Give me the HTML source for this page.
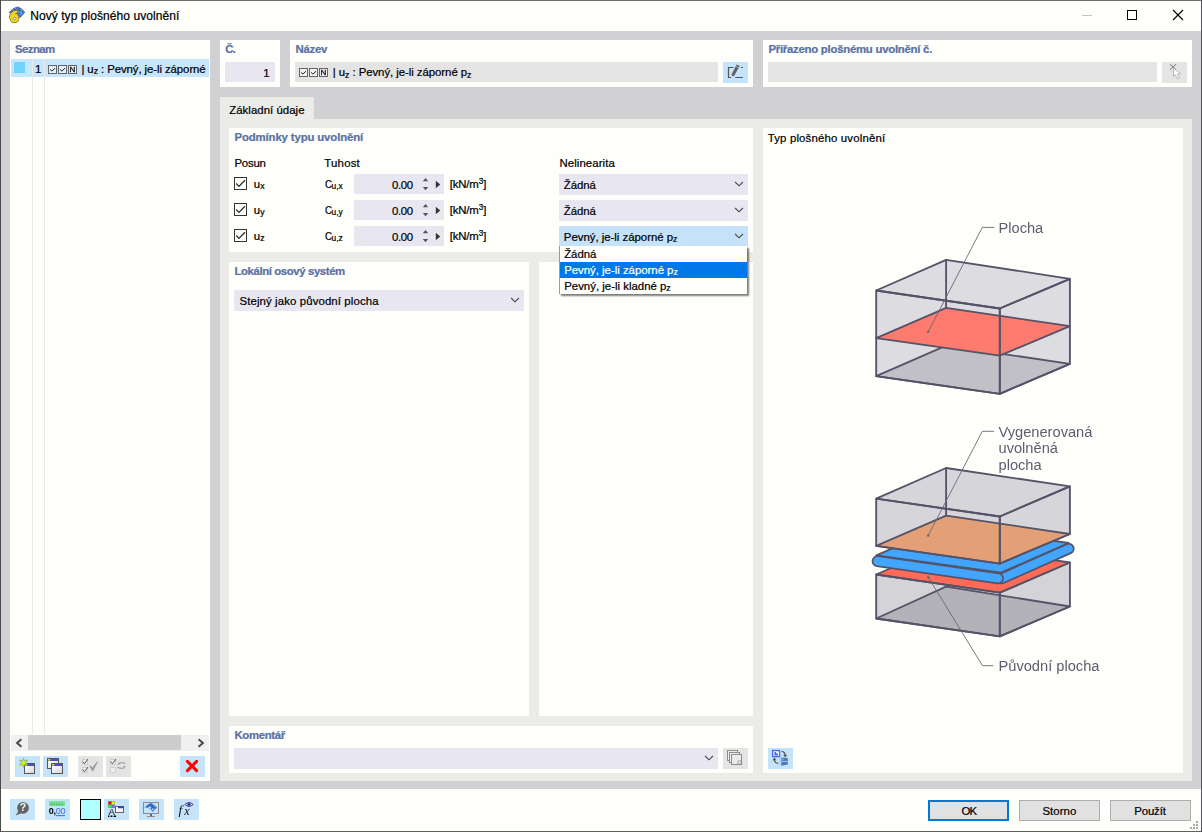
<!DOCTYPE html>
<html lang="cs">
<head>
<meta charset="utf-8">
<title>Nový typ plošného uvolnění</title>
<style>
html,body{margin:0;padding:0}
body{width:1202px;height:832px;overflow:hidden;position:relative;background:#d1d1d4;
font-family:"Liberation Sans",sans-serif;font-size:11.4px;color:#000}
#w{position:absolute;left:0;top:0;width:1202px;height:832px;overflow:hidden}
#w div,#w svg,#w .t{position:absolute}
#w svg{overflow:visible}
.t{white-space:nowrap;-webkit-text-stroke:0.22px currentColor}
.sb{position:relative;display:inline-block;line-height:0}
#w .t span{position:static}
#w .t .sb{position:relative}
</style>
</head>
<body>
<div id="w">
<div style="left:0px;top:0px;width:1202px;height:832px;background:#d1d1d4;"></div>
<div style="left:1px;top:1px;width:1200px;height:30px;background:#fefefb;"></div>
<div style="left:1px;top:789px;width:1200px;height:42px;background:#fefefb;"></div>
<svg width="0" height="0" style="left:0;top:0"><defs><linearGradient id="wg" x1="0" y1="0" x2="1" y2="1"><stop offset="0" stop-color="#ffffff"/><stop offset="1" stop-color="#d6d6d6"/></linearGradient></defs></svg>
<svg style="left:8px;top:6px;will-change:transform;" width="18" height="18" viewBox="0 0 18 18"><path d="M1.2 6.6 C3.6 3.6 6.6 1.6 9.6 1 C12.6 1.8 15 3.8 16.7 6.4 Q14.4 9 11.8 11.8 Q10.6 8.2 8.6 6.8 Q5 5.4 1.2 6.6 Z" fill="#3f7cd4" stroke="#4a5a78" stroke-width="0.8"/><path d="M4.4 4.6 Q8 4.2 11.4 6 M7 2.8 Q10.8 4 13.4 7.6 M13.4 3.6 Q13.6 7 12.6 9.4" stroke="#8fc4f6" stroke-width="0.9" fill="none"/><path d="M10.6 1.8 Q12 5.4 11.4 9.6 M5.4 3.4 Q9 3.2 14.8 5.6" stroke="#33507c" stroke-width="0.6" fill="none"/><path d="M3.0 11.2 Q3.2 6.6 8.4 5.6" fill="none" stroke="#5a5630" stroke-width="3.8" stroke-linecap="round"/><circle cx="6.5" cy="12.3" r="4.75" fill="#5a5630"/><circle cx="6.5" cy="12.3" r="4.1" fill="#f4d320"/><path d="M3.0 11.2 Q3.2 6.6 8.4 5.6" fill="none" stroke="#f4d320" stroke-width="2.4" stroke-linecap="round"/><text x="6.5" y="16.1" font-size="13" font-weight="700" text-anchor="middle" font-family="Liberation Sans, sans-serif" fill="#f4d320">6</text><path d="M6.4 7.6 Q8.6 6.8 10.4 7.2 L11.4 9.4 Q9 7.6 6.4 7.6 Z" fill="#55606e"/><path d="M9.6 6.4 Q11.6 7.6 12.2 10.6 L13.8 8.8 Q12.6 6.2 10.6 5.2 Z" fill="#3f8ae4"/><circle cx="6.5" cy="12.5" r="1.3" fill="#fff" stroke="#777" stroke-width="0.8"/></svg>
<span class="t" id="t1" style="top:9.14px;font-size:12px;line-height:15px;color:#000;left:30.2px;letter-spacing:0.068px;">Nový typ plošného uvolnění</span>
<div style="left:1082px;top:15px;width:10px;height:1px;background:#c4c4c4;"></div>
<svg style="left:1126px;top:9px;" width="12" height="12" viewBox="0 0 12 12"><rect x="1.5" y="1.5" width="9" height="9" fill="none" stroke="#000" stroke-width="1"/></svg>
<svg style="left:1172px;top:9px;" width="12" height="12" viewBox="0 0 12 12"><path d="M1 1 L11 11 M11 1 L1 11" fill="none" stroke="#000" stroke-width="1.1"/></svg>
<div style="left:10px;top:40px;width:200px;height:741px;background:#fefefb;"></div>
<span class="t" id="t2" style="top:42.05px;font-size:11.4px;line-height:14px;color:#5a70a3;font-weight:700;left:15px;letter-spacing:-0.560px;">Seznam</span>
<div style="left:11px;top:59px;width:198px;height:18px;background:#c7e5fb;"></div>
<div style="left:14px;top:62px;width:11px;height:11px;background:#6fd3ff;"></div>
<div style="left:32px;top:59px;width:1px;height:675px;background:#e9e9e7;"></div>
<div style="left:44px;top:59px;width:1px;height:675px;background:#e9e9e7;"></div>
<span class="t" id="t3" style="top:62.05px;font-size:11.4px;line-height:14px;color:#000;right:1160.6px;">1</span>
<svg style="left:48px;top:65px;" width="9" height="9" viewBox="0 0 9 9"><rect x="0.5" y="0.5" width="8" height="8" fill="rgba(255,255,255,0.45)" stroke="rgba(50,50,55,0.72)" stroke-width="1"/><path d="M2 4.4 L3.9 6.1 L7 3.2" fill="none" stroke="#222" stroke-width="1"/></svg>
<svg style="left:58px;top:65px;" width="9" height="9" viewBox="0 0 9 9"><rect x="0.5" y="0.5" width="8" height="8" fill="rgba(255,255,255,0.45)" stroke="rgba(50,50,55,0.72)" stroke-width="1"/><path d="M2 4.4 L3.9 6.1 L7 3.2" fill="none" stroke="#222" stroke-width="1"/></svg>
<svg style="left:68px;top:65px;will-change:transform;" width="9" height="9" viewBox="0 0 9 9"><rect x="0.5" y="0.5" width="8" height="8" fill="rgba(255,255,255,0.45)" stroke="rgba(50,50,55,0.72)" stroke-width="1"/><text x="4.5" y="7.2" font-size="8" font-weight="400" text-anchor="middle" font-family="Liberation Sans, sans-serif" fill="#111" stroke="#111" stroke-width="0.35">N</text></svg>
<span class="t" id="t4" style="top:62.05px;font-size:11.4px;line-height:14px;color:#000;left:81.4px;letter-spacing:-0.079px;">| u<span class="sb" style="font-size:8.7px;top:1.2px;">z</span> : Pevný, je-li záporné</span>
<div style="left:11px;top:735px;width:198px;height:16px;background:#f0f0f0;"></div>
<div style="left:28px;top:735px;width:153px;height:15px;background:#cdcdcd;"></div>
<svg style="left:14px;top:737px;" width="10" height="12" viewBox="0 0 10 12"><path d="M7.4 2.2 L3.1 6 L7.4 9.8" fill="none" stroke="#484848" stroke-width="2"/></svg>
<svg style="left:196px;top:737px;" width="10" height="12" viewBox="0 0 10 12"><path d="M2.6 2.2 L6.9 6 L2.6 9.8" fill="none" stroke="#484848" stroke-width="2"/></svg>
<div style="left:15px;top:756px;width:25px;height:21px;background:#c5e3f9;"></div>
<svg style="left:15px;top:756px;" width="25" height="21" viewBox="0 0 25 21"><rect x="9.5" y="7.5" width="10" height="10" fill="#f4f4f4" stroke="#555" stroke-width="1"/><rect x="10" y="8" width="9" height="2" fill="#555"/><rect x="13" y="8" width="6" height="1.6" fill="#4a4af0"/><rect x="10.2" y="8.2" width="2" height="1.2" fill="#fff"/><rect x="10" y="10" width="9" height="7" fill="url(#wg)"/><path d="M8.5 2.2 L9.6 5 L12.6 4.2 L10.8 6.6 L12.9 8.9 L9.9 8.5 L8.6 11.3 L7.7 8.5 L4.5 9 L6.7 6.8 L4.6 4.3 L7.6 5 Z" fill="#c8ff00" stroke="#7a9a4a" stroke-width="0.6"/></svg>
<div style="left:43px;top:756px;width:25px;height:21px;background:#c5e3f9;"></div>
<svg style="left:43px;top:756px;" width="25" height="21" viewBox="0 0 25 21"><rect x="4.5" y="2.5" width="11" height="10" fill="#f4f4f4" stroke="#555" stroke-width="1"/><rect x="5" y="3" width="10" height="2" fill="#555"/><rect x="8" y="3" width="7" height="1.6" fill="#4a4af0"/><rect x="5.2" y="3.2" width="2" height="1.2" fill="#fff"/><rect x="5" y="5" width="10" height="7" fill="url(#wg)"/><rect x="8.5" y="7.5" width="11" height="10" fill="#f4f4f4" stroke="#555" stroke-width="1"/><rect x="9" y="8" width="10" height="2" fill="#555"/><rect x="12" y="8" width="7" height="1.6" fill="#4a4af0"/><rect x="9.2" y="8.2" width="2" height="1.2" fill="#fff"/><rect x="9" y="10" width="10" height="7" fill="url(#wg)"/></svg>
<div style="left:78px;top:756px;width:25px;height:21px;background:#e4e4e4;"></div>
<svg style="left:78px;top:756px;" width="25" height="21" viewBox="0 0 25 21"><rect x="4.5" y="3.5" width="5" height="5" fill="#eeeeee" stroke="#cfcfcf" stroke-width="1"/><path d="M4.7 5.6 L6.5 7.7 L9.9 3.1" fill="none" stroke="#4c4c4c" stroke-width="0.95"/><rect x="4.5" y="11.5" width="5" height="5" fill="#eeeeee" stroke="#cfcfcf" stroke-width="1"/><path d="M4.7 13.6 L6.5 15.7 L9.9 11.1" fill="none" stroke="#4c4c4c" stroke-width="0.95"/><path d="M11.6 10.1 Q13.2 10.3 14.5 11.9 Q16.6 8.2 19.7 5.8 Q17.2 9.8 15.2 14.6 Q14.6 15.2 13.9 14.4 Q13 12 11.6 10.1 Z" fill="#9c9c9c" stroke="#9c9c9c" stroke-width="0.7" stroke-linejoin="round"/></svg>
<div style="left:106px;top:756px;width:25px;height:21px;background:#e4e4e4;"></div>
<svg style="left:106px;top:756px;" width="25" height="21" viewBox="0 0 25 21"><rect x="4.5" y="3.5" width="5" height="5" fill="#eeeeee" stroke="#cfcfcf" stroke-width="1"/><path d="M4.7 5.6 L6.5 7.7 L9.9 3.1" fill="none" stroke="#4c4c4c" stroke-width="0.95"/><rect x="4.5" y="11.5" width="5" height="5" fill="#eeeeee" stroke="#cfcfcf" stroke-width="1"/><path d="M12.6 7.6 Q15.6 5.6 19.3 7.6" fill="none" stroke="#a6a6a6" stroke-width="1.2"/><path d="M11 8.5 L13.6 6.4 L13.8 8.6 Z" fill="#9a9a9a"/><path d="M11.5 10.9 Q15 13.6 18.4 11.4" fill="none" stroke="#a6a6a6" stroke-width="1.2"/><path d="M20 10 L17.4 12.4 L17.2 10.2 Z" fill="#9a9a9a"/></svg>
<div style="left:180px;top:756px;width:25px;height:21px;background:#c5e3f9;"></div>
<svg style="left:180px;top:756px;" width="25" height="21" viewBox="0 0 25 21"><path d="M7.4 5.4 L16.6 14.6 M16.6 5.4 L7.4 14.6" fill="none" stroke="#ff0000" stroke-width="3" stroke-linecap="round"/></svg>
<div style="left:220px;top:40px;width:60px;height:47px;background:#fefefb;"></div>
<span class="t" id="t5" style="top:42.05px;font-size:11.4px;line-height:14px;color:#5a70a3;font-weight:700;left:225.2px;letter-spacing:-0.653px;">Č.</span>
<div style="left:225px;top:62px;width:50px;height:20px;background:#e8e7f1;"></div>
<span class="t" id="t6" style="top:65.65px;font-size:11.4px;line-height:14px;color:#000;right:932.5px;">1</span>
<div style="left:290px;top:40px;width:463px;height:47px;background:#fefefb;"></div>
<span class="t" id="t7" style="top:42.05px;font-size:11.4px;line-height:14px;color:#5a70a3;font-weight:700;left:295.6px;letter-spacing:-0.308px;">Název</span>
<div style="left:295px;top:62px;width:423px;height:20px;background:#e4e4e4;"></div>
<svg style="left:299px;top:68px;" width="9" height="9" viewBox="0 0 9 9"><rect x="0.5" y="0.5" width="8" height="8" fill="rgba(255,255,255,0.45)" stroke="rgba(50,50,55,0.72)" stroke-width="1"/><path d="M2 4.4 L3.9 6.1 L7 3.2" fill="none" stroke="#222" stroke-width="1"/></svg>
<svg style="left:309px;top:68px;" width="9" height="9" viewBox="0 0 9 9"><rect x="0.5" y="0.5" width="8" height="8" fill="rgba(255,255,255,0.45)" stroke="rgba(50,50,55,0.72)" stroke-width="1"/><path d="M2 4.4 L3.9 6.1 L7 3.2" fill="none" stroke="#222" stroke-width="1"/></svg>
<svg style="left:319px;top:68px;will-change:transform;" width="9" height="9" viewBox="0 0 9 9"><rect x="0.5" y="0.5" width="8" height="8" fill="rgba(255,255,255,0.45)" stroke="rgba(50,50,55,0.72)" stroke-width="1"/><text x="4.5" y="7.2" font-size="8" font-weight="400" text-anchor="middle" font-family="Liberation Sans, sans-serif" fill="#111" stroke="#111" stroke-width="0.35">N</text></svg>
<span class="t" id="t8" style="top:65.45px;font-size:11.4px;line-height:14px;color:#000;left:332.7px;letter-spacing:-0.050px;">| u<span class="sb" style="font-size:8.7px;top:1.2px;">z</span> : Pevný, je-li záporné p<span class="sb" style="font-size:8.7px;top:1.2px;">z</span></span>
<div style="left:723px;top:62px;width:25px;height:21px;background:#c5e3f9;"></div>
<svg style="left:723px;top:62px;" width="25" height="21" viewBox="0 0 25 21"><path d="M10.4 5.5 L5.5 5.5 L5.5 15.5 L8 15.5 M12.2 15.5 L20 15.5 M18 5.5 L20 5.5" fill="none" stroke="#555" stroke-width="1.2"/><path d="M13.7 2.5 L16.6 3.9 L11.5 13.3 L9.2 15.3 L8.7 12.2 Z" fill="#606060"/><path d="M12.9 4.4 L15.6 5.8" stroke="#c5e3f9" stroke-width="0.6"/><path d="M9.0 13.4 L10.4 14.2 L9.2 15.3 Z" fill="#d0e4f4"/></svg>
<div style="left:763px;top:40px;width:429px;height:47px;background:#fefefb;"></div>
<span class="t" id="t9" style="top:42.05px;font-size:11.4px;line-height:14px;color:#5a70a3;font-weight:700;left:768.4px;letter-spacing:-0.261px;">Přiřazeno plošnému uvolnění č.</span>
<div style="left:768px;top:62px;width:389px;height:20px;background:#e4e4e4;"></div>
<div style="left:1162px;top:62px;width:25px;height:21px;background:#e4e4e4;"></div>
<svg style="left:1162px;top:62px;" width="25" height="21" viewBox="0 0 25 21"><path d="M8 2.2 L14 7.6 M14 2.2 L8 7.6" fill="none" stroke="#7c7c7c" stroke-width="1"/><path d="M11.6 6 L11.6 14.4 L13.4 12.8 L15.6 16.6 L17.4 15.6 L15.4 12 L18.4 11.6 Z" fill="#fefefe" stroke="#a8a8a8" stroke-width="0.8"/></svg>
<div style="left:220px;top:97px;width:94px;height:22px;background:#ebece8;"></div>
<div style="left:220px;top:119px;width:972px;height:662px;background:#ebece8;"></div>
<span class="t" id="t10" style="top:102.55px;font-size:11.4px;line-height:14px;color:#000;left:229.2px;letter-spacing:0.048px;">Základní údaje</span>
<div style="left:229px;top:128px;width:524px;height:124px;background:#fefefb;"></div>
<div style="left:229px;top:262px;width:300px;height:454px;background:#fefefb;"></div>
<div style="left:539px;top:262px;width:214px;height:454px;background:#fefefb;"></div>
<div style="left:229px;top:726px;width:524px;height:47px;background:#fefefb;"></div>
<div style="left:763px;top:128px;width:420px;height:645px;background:#fefefb;"></div>
<span class="t" id="t11" style="top:130.45px;font-size:11.4px;line-height:14px;color:#5a70a3;font-weight:700;left:234.5px;letter-spacing:-0.143px;">Podmínky typu uvolnění</span>
<span class="t" id="t12" style="top:156.15px;font-size:11.4px;line-height:14px;color:#000;left:234.5px;letter-spacing:-0.223px;">Posun</span>
<span class="t" id="t13" style="top:156.15px;font-size:11.4px;line-height:14px;color:#000;left:324.3px;letter-spacing:0.216px;">Tuhost</span>
<span class="t" id="t14" style="top:156.15px;font-size:11.4px;line-height:14px;color:#000;left:559.4px;letter-spacing:0.095px;">Nelinearita</span>
<svg style="left:234px;top:177px;" width="13" height="13" viewBox="0 0 13 13"><rect x="0.5" y="0.5" width="12" height="12" fill="#fefefb" stroke="#333" stroke-width="1"/><path d="M2.2 6.5 L5 9.4 L10.9 3.2" fill="none" stroke="#2c2c2c" stroke-width="1.25"/></svg>
<span class="t" id="t15" style="top:177.25px;font-size:11.4px;line-height:14px;color:#000;left:253.8px;">u<span class="sb" style="font-size:8.7px;top:1.2px;">x</span></span>
<span class="t" id="t16" style="top:177.25px;font-size:11.4px;line-height:14px;color:#000;left:324.6px;"><span style="display:inline-block;transform:scaleX(0.86);transform-origin:0 50%">C</span><span class="sb" style="font-size:8.4px;top:1.2px;margin-left:-1.3px;">u,x</span></span>
<div style="left:354px;top:174px;width:90px;height:20px;background:#e8e7f1;"></div>
<span class="t" id="t17" style="top:177.55px;font-size:11.4px;line-height:14px;color:#000;right:789.4px;letter-spacing:-0.393px;">0.00</span>
<svg style="left:422px;top:177px;" width="7" height="14" viewBox="0 0 7 14"><path d="M0.8 4.2 L3.5 1 L6.2 4.2 Z M0.8 10 L6.2 10 L3.5 13.2 Z" fill="#555"/></svg>
<svg style="left:435px;top:180px;" width="6" height="9" viewBox="0 0 6 9"><path d="M0.8 0.8 L5.2 4.5 L0.8 8.2 Z" fill="#333"/></svg>
<span class="t" id="t18" style="top:177.25px;font-size:11.4px;line-height:14px;color:#000;left:449.7px;letter-spacing:-0.141px;">[kN/m<span class="sb" style="font-size:8.2px;top:-4px">3</span>]</span>
<div style="left:559px;top:174px;width:189px;height:21px;background:#e8e7f1;"></div>
<span class="t" id="t19" style="top:178.05px;font-size:11.4px;line-height:14px;color:#000;left:563.8px;letter-spacing:-0.042px;">Žádná</span>
<svg style="left:733px;top:180.3px;" width="12" height="8" viewBox="0 0 12 8"><path d="M2.1 2 L6 5.8 L9.9 2" fill="none" stroke="#444" stroke-width="1.1"/></svg>
<svg style="left:234px;top:203px;" width="13" height="13" viewBox="0 0 13 13"><rect x="0.5" y="0.5" width="12" height="12" fill="#fefefb" stroke="#333" stroke-width="1"/><path d="M2.2 6.5 L5 9.4 L10.9 3.2" fill="none" stroke="#2c2c2c" stroke-width="1.25"/></svg>
<span class="t" id="t20" style="top:203.25px;font-size:11.4px;line-height:14px;color:#000;left:253.8px;">u<span class="sb" style="font-size:8.7px;top:1.2px;">y</span></span>
<span class="t" id="t21" style="top:203.25px;font-size:11.4px;line-height:14px;color:#000;left:324.6px;"><span style="display:inline-block;transform:scaleX(0.86);transform-origin:0 50%">C</span><span class="sb" style="font-size:8.4px;top:1.2px;margin-left:-1.3px;">u,y</span></span>
<div style="left:354px;top:200px;width:90px;height:20px;background:#e8e7f1;"></div>
<span class="t" id="t22" style="top:203.55px;font-size:11.4px;line-height:14px;color:#000;right:789.4px;letter-spacing:-0.393px;">0.00</span>
<svg style="left:422px;top:203px;" width="7" height="14" viewBox="0 0 7 14"><path d="M0.8 4.2 L3.5 1 L6.2 4.2 Z M0.8 10 L6.2 10 L3.5 13.2 Z" fill="#555"/></svg>
<svg style="left:435px;top:206px;" width="6" height="9" viewBox="0 0 6 9"><path d="M0.8 0.8 L5.2 4.5 L0.8 8.2 Z" fill="#333"/></svg>
<span class="t" id="t23" style="top:203.25px;font-size:11.4px;line-height:14px;color:#000;left:449.7px;letter-spacing:-0.141px;">[kN/m<span class="sb" style="font-size:8.2px;top:-4px">3</span>]</span>
<div style="left:559px;top:200px;width:189px;height:21px;background:#e8e7f1;"></div>
<span class="t" id="t24" style="top:204.05px;font-size:11.4px;line-height:14px;color:#000;left:563.8px;letter-spacing:-0.042px;">Žádná</span>
<svg style="left:733px;top:206.3px;" width="12" height="8" viewBox="0 0 12 8"><path d="M2.1 2 L6 5.8 L9.9 2" fill="none" stroke="#444" stroke-width="1.1"/></svg>
<svg style="left:234px;top:229px;" width="13" height="13" viewBox="0 0 13 13"><rect x="0.5" y="0.5" width="12" height="12" fill="#fefefb" stroke="#333" stroke-width="1"/><path d="M2.2 6.5 L5 9.4 L10.9 3.2" fill="none" stroke="#2c2c2c" stroke-width="1.25"/></svg>
<span class="t" id="t25" style="top:229.25px;font-size:11.4px;line-height:14px;color:#000;left:253.8px;">u<span class="sb" style="font-size:8.7px;top:1.2px;">z</span></span>
<span class="t" id="t26" style="top:229.25px;font-size:11.4px;line-height:14px;color:#000;left:324.6px;"><span style="display:inline-block;transform:scaleX(0.86);transform-origin:0 50%">C</span><span class="sb" style="font-size:8.4px;top:1.2px;margin-left:-1.3px;">u,z</span></span>
<div style="left:354px;top:226px;width:90px;height:20px;background:#e8e7f1;"></div>
<span class="t" id="t27" style="top:229.55px;font-size:11.4px;line-height:14px;color:#000;right:789.4px;letter-spacing:-0.393px;">0.00</span>
<svg style="left:422px;top:229px;" width="7" height="14" viewBox="0 0 7 14"><path d="M0.8 4.2 L3.5 1 L6.2 4.2 Z M0.8 10 L6.2 10 L3.5 13.2 Z" fill="#555"/></svg>
<svg style="left:435px;top:232px;" width="6" height="9" viewBox="0 0 6 9"><path d="M0.8 0.8 L5.2 4.5 L0.8 8.2 Z" fill="#333"/></svg>
<span class="t" id="t28" style="top:229.25px;font-size:11.4px;line-height:14px;color:#000;left:449.7px;letter-spacing:-0.141px;">[kN/m<span class="sb" style="font-size:8.2px;top:-4px">3</span>]</span>
<div style="left:559px;top:226px;width:189px;height:21px;background:#c5e2f8;"></div>
<span class="t" id="t29" style="top:230.05px;font-size:11.4px;line-height:14px;color:#000;left:563.8px;letter-spacing:-0.013px;">Pevný, je-li záporné p<span class="sb" style="font-size:8.7px;top:1.2px;">z</span></span>
<svg style="left:733px;top:232.3px;" width="12" height="8" viewBox="0 0 12 8"><path d="M2.1 2 L6 5.8 L9.9 2" fill="none" stroke="#444" stroke-width="1.1"/></svg>
<span class="t" id="t30" style="top:264.25px;font-size:11.4px;line-height:14px;color:#5a70a3;font-weight:700;left:234.5px;letter-spacing:-0.405px;">Lokální osový systém</span>
<div style="left:234px;top:290px;width:290px;height:21px;background:#e8e7f1;"></div>
<span class="t" id="t31" style="top:294.05px;font-size:11.4px;line-height:14px;color:#000;left:239.5px;letter-spacing:0.113px;">Stejný jako původní plocha</span>
<svg style="left:509px;top:296.3px;" width="12" height="8" viewBox="0 0 12 8"><path d="M2.1 2 L6 5.8 L9.9 2" fill="none" stroke="#444" stroke-width="1.1"/></svg>
<span class="t" id="t32" style="top:728.15px;font-size:11.4px;line-height:14px;color:#5a70a3;font-weight:700;left:234.5px;letter-spacing:-0.359px;">Komentář</span>
<div style="left:234px;top:748px;width:484px;height:21px;background:#e8e7f1;"></div>
<svg style="left:703px;top:754.3px;" width="12" height="8" viewBox="0 0 12 8"><path d="M2.1 2 L6 5.8 L9.9 2" fill="none" stroke="#444" stroke-width="1.1"/></svg>
<div style="left:723px;top:748px;width:25px;height:21px;background:#e4e4e4;"></div>
<svg style="left:723px;top:748px;" width="25" height="21" viewBox="0 0 25 21"><rect x="4.5" y="2.5" width="10" height="10" fill="#ececec" stroke="#8e8e8e" stroke-width="1"/><rect x="6.5" y="4.5" width="10" height="10" fill="#ececec" stroke="#8e8e8e" stroke-width="1"/><rect x="8.5" y="6.5" width="10" height="10" fill="#ececec" stroke="#8e8e8e" stroke-width="1"/><rect x="15" y="13" width="3" height="3" fill="#fdfdfd" stroke="#8e8e8e" stroke-width="0.8"/></svg>
<span class="t" id="t33" style="top:130.65px;font-size:11.4px;line-height:14px;color:#000;left:767.7px;letter-spacing:0.171px;">Typ plošného uvolnění</span>
<div style="left:768px;top:748px;width:25px;height:21px;background:#c5e3f9;"></div>
<svg style="left:768px;top:748px;" width="25" height="21" viewBox="0 0 25 21"><rect x="4.6" y="2.6" width="7" height="6" fill="#fff" stroke="#4169e8" stroke-width="1.3"/><path d="M6.4 4 L8.2 4 L8.2 5.6 L10 5.6 L10 7.4 L6.4 7.4 Z" fill="#4169e8"/><path d="M13.6 3.4 C16 3.6 17.2 5.2 17.2 8" fill="none" stroke="#555" stroke-width="1.1"/><path d="M15.2 6.8 L19.2 6.8 L17.2 9.4 Z" fill="#555"/><path d="M10.2 15.4 C7.8 15.2 6.4 13.8 6.4 11.2" fill="none" stroke="#555" stroke-width="1.1"/><path d="M4.4 12.2 L8.4 12.2 L6.4 9.6 Z" fill="#555"/><path d="M13.2 9.4 L19.8 10 L19.8 16.6 L13.2 17.7 Z" fill="#4f79b8"/><path d="M11 10.6 L13.2 9.4 L13.2 17.7 L11 16.4 Z" fill="#a8d4f8"/><path d="M13.4 12.7 L19.8 13 L19.8 14 L13.4 13.9 Z" fill="#9cc0ea"/><path d="M13.4 10.6 L16 10.8 L16 12 L13.4 11.9 Z" fill="#7fa4d8"/></svg>
<svg style="left:763px;top:128px;will-change:transform" width="420" height="645" viewBox="763 128 420 645"><polygon points="876.2,290.5 946.1,259.8 1069.9,278.8 1069.9,363.8 999.8,393.8 876.2,376.2" fill="#dddde1" stroke="none" stroke-width="1.85" stroke-linejoin="round" /><polygon points="876.2,376.2 946.1,345.6 1069.9,363.8 999.8,393.8" fill="#c1c0c6" stroke="#555368" stroke-width="1.85" stroke-linejoin="round" /><line x1="946.1" y1="259.8" x2="946.1" y2="307.8" stroke="#555368" stroke-width="1.85" stroke-linecap="round" /><polygon points="876.2,338.1 946.1,307.8 1069.9,326.2 999.8,355.6" fill="#fd7a6e" stroke="#555368" stroke-width="1.85" stroke-linejoin="round" /><polygon points="876.2,290.5 946.1,259.8 1069.9,278.8 999.8,308.5" fill="none" stroke="#555368" stroke-width="1.85" stroke-linejoin="round" /><polygon points="876.2,290.5 999.8,308.5 999.8,393.8 876.2,376.2" fill="none" stroke="#555368" stroke-width="1.85" stroke-linejoin="round" /><polygon points="999.8,308.5 1069.9,278.8 1069.9,363.8 999.8,393.8" fill="none" stroke="#555368" stroke-width="1.85" stroke-linejoin="round" /><polygon points="876.2,574.5 946.1,544.2 1069.9,562.5 1069.9,606.5 999.8,636.3 876.2,618.5" fill="#d3d3d8" stroke="none" stroke-width="1.85" stroke-linejoin="round" /><polygon points="876.2,618.5 946.1,586.6 1069.9,606.5 999.8,636.3" fill="#b3b2b9" stroke="#555368" stroke-width="1.85" stroke-linejoin="round" /><polygon points="876.2,574.5 946.1,544.2 1069.9,562.5 999.8,592.7" fill="#ff6b57" stroke="#555368" stroke-width="1.85" stroke-linejoin="round" /><polygon points="876.2,574.5 999.8,592.7 999.8,636.3 876.2,618.5" fill="none" stroke="#555368" stroke-width="1.85" stroke-linejoin="round" /><polygon points="999.8,592.7 1069.9,562.5 1069.9,606.5 999.8,636.3" fill="none" stroke="#555368" stroke-width="1.85" stroke-linejoin="round" /><polygon points="876.3,555.4 946.3,525.2 1068.6,543.0 1001.2,572.6" fill="#42a5ff" stroke="#555368" stroke-width="1.85" stroke-linejoin="round" /><line x1="1001.6" y1="578.6" x2="1068.8" y2="548.7" stroke="#555368" stroke-width="11.5" stroke-linecap="round"/><line x1="1001.6" y1="578.6" x2="1068.8" y2="548.7" stroke="#42a5ff" stroke-width="8.0" stroke-linecap="round"/><line x1="877.6" y1="561.2" x2="997.9" y2="578.3" stroke="#555368" stroke-width="11.9" stroke-linecap="round"/><line x1="877.6" y1="561.2" x2="997.9" y2="578.3" stroke="#42a5ff" stroke-width="8.4" stroke-linecap="round"/><polygon points="876.2,498.7 946.1,468.0 1069.9,486.4 1069.9,534.0 999.8,563.6 876.2,545.9" fill="#d6d6da" stroke="none" stroke-width="1.85" stroke-linejoin="round" /><polygon points="876.2,545.9 946.1,515.6 1069.9,534.0 999.8,563.6" fill="#e3a077" stroke="#555368" stroke-width="1.85" stroke-linejoin="round" /><line x1="946.1" y1="468.0" x2="946.1" y2="515.6" stroke="#555368" stroke-width="1.85" stroke-linecap="round" /><polygon points="876.2,498.7 946.1,468.0 1069.9,486.4 999.8,516.5" fill="none" stroke="#555368" stroke-width="1.85" stroke-linejoin="round" /><polygon points="876.2,498.7 999.8,516.5 999.8,563.6 876.2,545.9" fill="none" stroke="#555368" stroke-width="1.85" stroke-linejoin="round" /><polygon points="999.8,516.5 1069.9,486.4 1069.9,534.0 999.8,563.6" fill="none" stroke="#555368" stroke-width="1.85" stroke-linejoin="round" /><polyline points="928.2,331.8 982.3,227.4 994.2,227.4" fill="none" stroke="#6a687a" stroke-width="0.9"/><circle cx="928.2" cy="331.8" r="1.3" fill="#6a687a"/><polyline points="928.2,535.5 982.3,431.3 994.2,431.3" fill="none" stroke="#6a687a" stroke-width="0.9"/><circle cx="928.2" cy="535.5" r="1.3" fill="#6a687a"/><polyline points="928.3,577.4 982.5,665.7 993.4,665.7" fill="none" stroke="#6a687a" stroke-width="0.9"/><circle cx="928.3" cy="577.4" r="1.3" fill="#6a687a"/><text x="998.5" y="233.4" font-family="Liberation Sans, sans-serif" font-size="14.65" fill="#5e5d70">Plocha</text><text x="998.5" y="437.0" font-family="Liberation Sans, sans-serif" font-size="14.65" fill="#5e5d70">Vygenerovaná</text><text x="998.5" y="453.3" font-family="Liberation Sans, sans-serif" font-size="14.65" fill="#5e5d70">uvolněná</text><text x="998.5" y="469.5" font-family="Liberation Sans, sans-serif" font-size="14.65" fill="#5e5d70">plocha</text><text x="998.5" y="671.3" font-family="Liberation Sans, sans-serif" font-size="14.65" fill="#5e5d70">Původní plocha</text></svg>
<div style="left:559px;top:246px;width:188px;height:48px;background:#fefefb;box-sizing:border-box;border-left:1px solid #9a9a9a;box-shadow:2px 2px 1.6px rgba(0,0,0,0.5)"></div>
<div style="left:560px;top:262px;width:187px;height:16px;background:#0078ea;"></div>
<span class="t" id="t34" style="top:247.05px;font-size:11.4px;line-height:14px;color:#000;left:564.2px;letter-spacing:-0.042px;">Žádná</span>
<span class="t" id="t35" style="top:262.55px;font-size:11.4px;line-height:14px;color:#fff;left:564.2px;letter-spacing:-0.013px;">Pevný, je-li záporné p<span class="sb" style="font-size:8.7px;top:1.2px;">z</span></span>
<span class="t" id="t36" style="top:278.65px;font-size:11.4px;line-height:14px;color:#000;left:564.2px;letter-spacing:0.010px;">Pevný, je-li kladné p<span class="sb" style="font-size:8.7px;top:1.2px;">z</span></span>
<div style="left:10px;top:799px;width:25px;height:21px;background:#c5e3f9;"></div>
<svg style="left:10px;top:799px;will-change:transform;" width="25" height="21" viewBox="0 0 25 21"><path d="M5.6 16.6 L8.8 11.6 L12 14 Z" fill="#636363"/><circle cx="13" cy="8.8" r="5.9" fill="#636363"/><text x="13" y="12.4" font-size="10.5" font-weight="700" text-anchor="middle" font-family="Liberation Sans, sans-serif" fill="#fafafa">?</text></svg>
<div style="left:45px;top:799px;width:25px;height:21px;background:#c5e3f9;"></div>
<svg style="left:45px;top:799px;will-change:transform;" width="25" height="21" viewBox="0 0 25 21"><rect x="4" y="2.2" width="16" height="4.6" fill="#6fe08a"/><path d="M6.6 4.6 V6.8 M9.2 4.6 V6.8 M11.8 4.6 V6.8 M14.4 4.6 V6.8 M17 4.6 V6.8" stroke="#4fb86a" stroke-width="1.2"/><text x="3.8" y="15.2" font-size="9" font-weight="700" font-family="Liberation Sans, sans-serif" fill="#000" letter-spacing="-0.3">0,</text><text x="10.8" y="15.2" font-size="9" font-family="Liberation Sans, sans-serif" fill="#3f6ff0" letter-spacing="-0.4">00</text><rect x="11" y="16.1" width="9" height="1" fill="#3f6ff0"/></svg>
<div style="left:80px;top:799px;width:21px;height:21px;background:#b2ffff;box-sizing:border-box;border:1px solid #000;"></div>
<div style="left:104px;top:799px;width:25px;height:21px;background:#c5e3f9;"></div>
<svg style="left:104px;top:799px;will-change:transform;" width="25" height="21" viewBox="0 0 25 21"><rect x="4" y="2" width="7" height="7" fill="#8a9a8a"/><rect x="4.6" y="2.6" width="2.8" height="2.8" fill="#ff0000"/><rect x="7.8" y="2.6" width="2.8" height="2.8" fill="#e8ff00"/><rect x="4.6" y="5.8" width="2.8" height="2.8" fill="#00ff30"/><rect x="7.8" y="5.8" width="2.8" height="2.8" fill="#7a5cff"/><text x="7.6" y="16.2" font-size="9.5" text-anchor="middle" font-family="Liberation Sans, sans-serif" fill="#000">A</text><path d="M4 17.2 H5.4 M6.6 17.2 H8.4 M9.6 17.2 H12" stroke="#000" stroke-width="1.4"/><rect x="11.5" y="7.5" width="8" height="6" fill="#f4f4f4" stroke="#666" stroke-width="1"/><rect x="14" y="7.4" width="5.6" height="1.8" fill="#3a3aa8"/><rect x="12" y="8" width="1.6" height="1.2" fill="#fff"/></svg>
<div style="left:139px;top:799px;width:25px;height:21px;background:#c5e3f9;"></div>
<svg style="left:139px;top:799px;" width="25" height="21" viewBox="0 0 25 21"><rect x="4.5" y="3.5" width="15" height="11" fill="none" stroke="#8c8c8c" stroke-width="1"/><rect x="11" y="15" width="2" height="2" fill="#6a6a6a"/><rect x="8" y="17" width="8" height="1" fill="#8c8c8c"/><path d="M5.4 8.6 Q8 5.4 11.6 3.9 Q15.4 5.4 18.1 8.5 Q15.8 10.4 13.6 13.1 Q12.6 10.6 10.8 9.4 Q8.4 8.4 5.4 8.6 Z" fill="#3f7cd4"/><path d="M7.6 7.4 Q10 6.6 13 7.6 M9.6 5.6 Q13 6.4 15.4 9.4 M12.6 4.6 Q13.4 8 13.2 11.4" stroke="#2f5ca8" stroke-width="0.7" fill="none"/><path d="M8.4 8 L11.4 7.4 L12.4 9.4 Z M12.6 10 L14.6 9.2 L13.8 11.6 Z" fill="#dcecfc"/></svg>
<div style="left:174px;top:799px;width:25px;height:21px;background:#c5e3f9;"></div>
<svg style="left:174px;top:799px;will-change:transform;" width="25" height="21" viewBox="0 0 25 21"><text x="4.6" y="15.4" font-size="13.5" font-style="italic" font-family="Liberation Serif, serif" fill="#111">f</text><text x="10.2" y="15.7" font-size="12" font-style="italic" font-family="Liberation Serif, serif" fill="#111">x</text><path d="M10.8 5.5 Q15 1.6 19.2 5.5 Q15 9.2 10.8 5.5 Z" fill="#f4f0fa" stroke="#5a2d7a" stroke-width="1"/><circle cx="15" cy="5.4" r="1.9" fill="#3f6fd8"/><circle cx="15" cy="5.4" r="0.8" fill="#101840"/></svg>
<div style="left:928px;top:800px;width:81px;height:21px;background:#e1e1e1;box-sizing:border-box;border:2px solid #0078d7"></div>
<div style="left:1019px;top:800px;width:81px;height:21px;background:#e1e1e1;box-sizing:border-box;border:1px solid #adadad"></div>
<div style="left:1110px;top:800px;width:81px;height:21px;background:#e1e1e1;box-sizing:border-box;border:1px solid #adadad"></div>
<div class="t" style="top:803.85px;font-size:11.4px;line-height:14px;color:#000;left:819px;width:300px;text-align:center;letter-spacing:-0.834px;"><span id="t37">OK</span></div>
<div class="t" style="top:803.85px;font-size:11.4px;line-height:14px;color:#000;left:909.4000000000001px;width:300px;text-align:center;letter-spacing:0.056px;"><span id="t38">Storno</span></div>
<div class="t" style="top:803.85px;font-size:11.4px;line-height:14px;color:#000;left:1000px;width:300px;text-align:center;letter-spacing:-0.166px;"><span id="t39">Použít</span></div>
<svg style="left:1188px;top:820px;" width="13" height="11" viewBox="0 0 13 11"><rect x="8" y="1" width="2" height="2" fill="#a8a8a8"/><rect x="5" y="4" width="2" height="2" fill="#a8a8a8"/><rect x="8" y="4" width="2" height="2" fill="#a8a8a8"/><rect x="2" y="7" width="2" height="2" fill="#a8a8a8"/><rect x="5" y="7" width="2" height="2" fill="#a8a8a8"/><rect x="8" y="7" width="2" height="2" fill="#a8a8a8"/></svg>
<div style="left:0px;top:0px;width:1202px;height:1px;background:#6f6f6f;"></div>
<div style="left:0px;top:831px;width:1202px;height:1px;background:#5f5f5f;"></div>
<div style="left:0px;top:0px;width:1px;height:832px;background:#4a4a4f;"></div>
<div style="left:1201px;top:0px;width:1px;height:832px;background:#55555a;"></div>
</div>
</body>
</html>
